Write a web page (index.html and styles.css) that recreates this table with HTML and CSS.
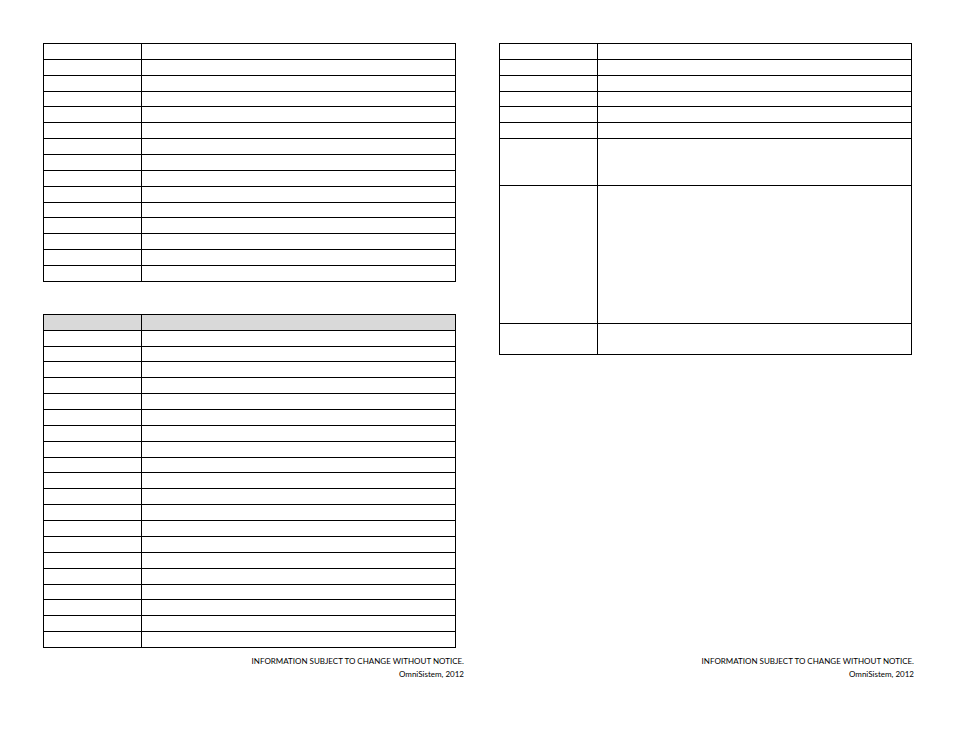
FILE: index.html
```html
<!DOCTYPE html>
<html>
<head>
<meta charset="utf-8">
<link rel="stylesheet" href="styles.css">
</head>
<body>
<div class="sheet">
  <section class="page page-left">
    <div class="content">
      <table class="grid">
        <tr><td class="c1"></td><td></td></tr>
        <tr><td class="c1"></td><td></td></tr>
        <tr><td class="c1"></td><td></td></tr>
        <tr><td class="c1"></td><td></td></tr>
        <tr><td class="c1"></td><td></td></tr>
        <tr><td class="c1"></td><td></td></tr>
        <tr><td class="c1"></td><td></td></tr>
        <tr><td class="c1"></td><td></td></tr>
        <tr><td class="c1"></td><td></td></tr>
        <tr><td class="c1"></td><td></td></tr>
        <tr><td class="c1"></td><td></td></tr>
        <tr><td class="c1"></td><td></td></tr>
        <tr><td class="c1"></td><td></td></tr>
        <tr><td class="c1"></td><td></td></tr>
        <tr><td class="c1"></td><td></td></tr>
      </table>
      <table class="grid second">
        <tr class="head"><td class="c1"></td><td></td></tr>
        <tr><td class="c1"></td><td></td></tr>
        <tr><td class="c1"></td><td></td></tr>
        <tr><td class="c1"></td><td></td></tr>
        <tr><td class="c1"></td><td></td></tr>
        <tr><td class="c1"></td><td></td></tr>
        <tr><td class="c1"></td><td></td></tr>
        <tr><td class="c1"></td><td></td></tr>
        <tr><td class="c1"></td><td></td></tr>
        <tr><td class="c1"></td><td></td></tr>
        <tr><td class="c1"></td><td></td></tr>
        <tr><td class="c1"></td><td></td></tr>
        <tr><td class="c1"></td><td></td></tr>
        <tr><td class="c1"></td><td></td></tr>
        <tr><td class="c1"></td><td></td></tr>
        <tr><td class="c1"></td><td></td></tr>
        <tr><td class="c1"></td><td></td></tr>
        <tr><td class="c1"></td><td></td></tr>
        <tr><td class="c1"></td><td></td></tr>
        <tr><td class="c1"></td><td></td></tr>
        <tr><td class="c1"></td><td></td></tr>
      </table>
    </div>
    <footer class="foot">
      <p>INFORMATION SUBJECT TO CHANGE WITHOUT NOTICE.</p>
      <p>OmniSistem, 2012</p>
    </footer>
  </section>
  <section class="page page-right">
    <div class="content">
      <table class="grid">
        <tr><td class="c1"></td><td></td></tr>
        <tr><td class="c1"></td><td></td></tr>
        <tr><td class="c1"></td><td></td></tr>
        <tr><td class="c1"></td><td></td></tr>
        <tr><td class="c1"></td><td></td></tr>
        <tr><td class="c1"></td><td></td></tr>
        <tr class="tall"><td class="c1"></td><td></td></tr>
        <tr class="taller"><td class="c1"></td><td></td></tr>
        <tr class="mid"><td class="c1"></td><td></td></tr>
      </table>
    </div>
    <footer class="foot">
      <p>INFORMATION SUBJECT TO CHANGE WITHOUT NOTICE.</p>
      <p>OmniSistem, 2012</p>
    </footer>
  </section>
</div>
</body>
</html>
```
FILE: styles.css
```css
html, body {
  margin: 0;
  padding: 0;
  background: #ffffff;
}

body {
  font-family: "Liberation Sans", Arial, sans-serif;
  color: #000000;
}

.sheet {
  display: flex;
  gap: 43px;
  padding: 43px 0 0 43px;
  width: 954px;
  height: 738px;
  box-sizing: border-box;
}

.page {
  width: 413px;
  display: flex;
  flex-direction: column;
}

.content {
  height: 605px;
  display: flex;
  flex-direction: column;
}

.grid {
  width: 413px;
  border-collapse: collapse;
  table-layout: fixed;
}

.grid td {
  border: 1px solid #000000;
  padding: 0;
  height: 14.87px;
}

.grid .c1 {
  width: 97px;
}

.grid .head td {
  background: #d9d9d9;
}

.grid .tall td {
  height: 46px;
}

.grid .taller td {
  height: 137px;
}

.grid .mid td {
  height: 30px;
}

.second {
  margin-top: 32px;
}

.foot {
  margin-top: 7px;
  text-align: right;
  font-family: Lato, "Liberation Sans", sans-serif;
  font-size: 8px;
  line-height: 13px;
  color: #000000;
}

.page-left .foot {
  margin-right: -8px;
}

.page-right .foot {
  margin-right: -2px;
}

.foot p {
  margin: 0;
}
```
